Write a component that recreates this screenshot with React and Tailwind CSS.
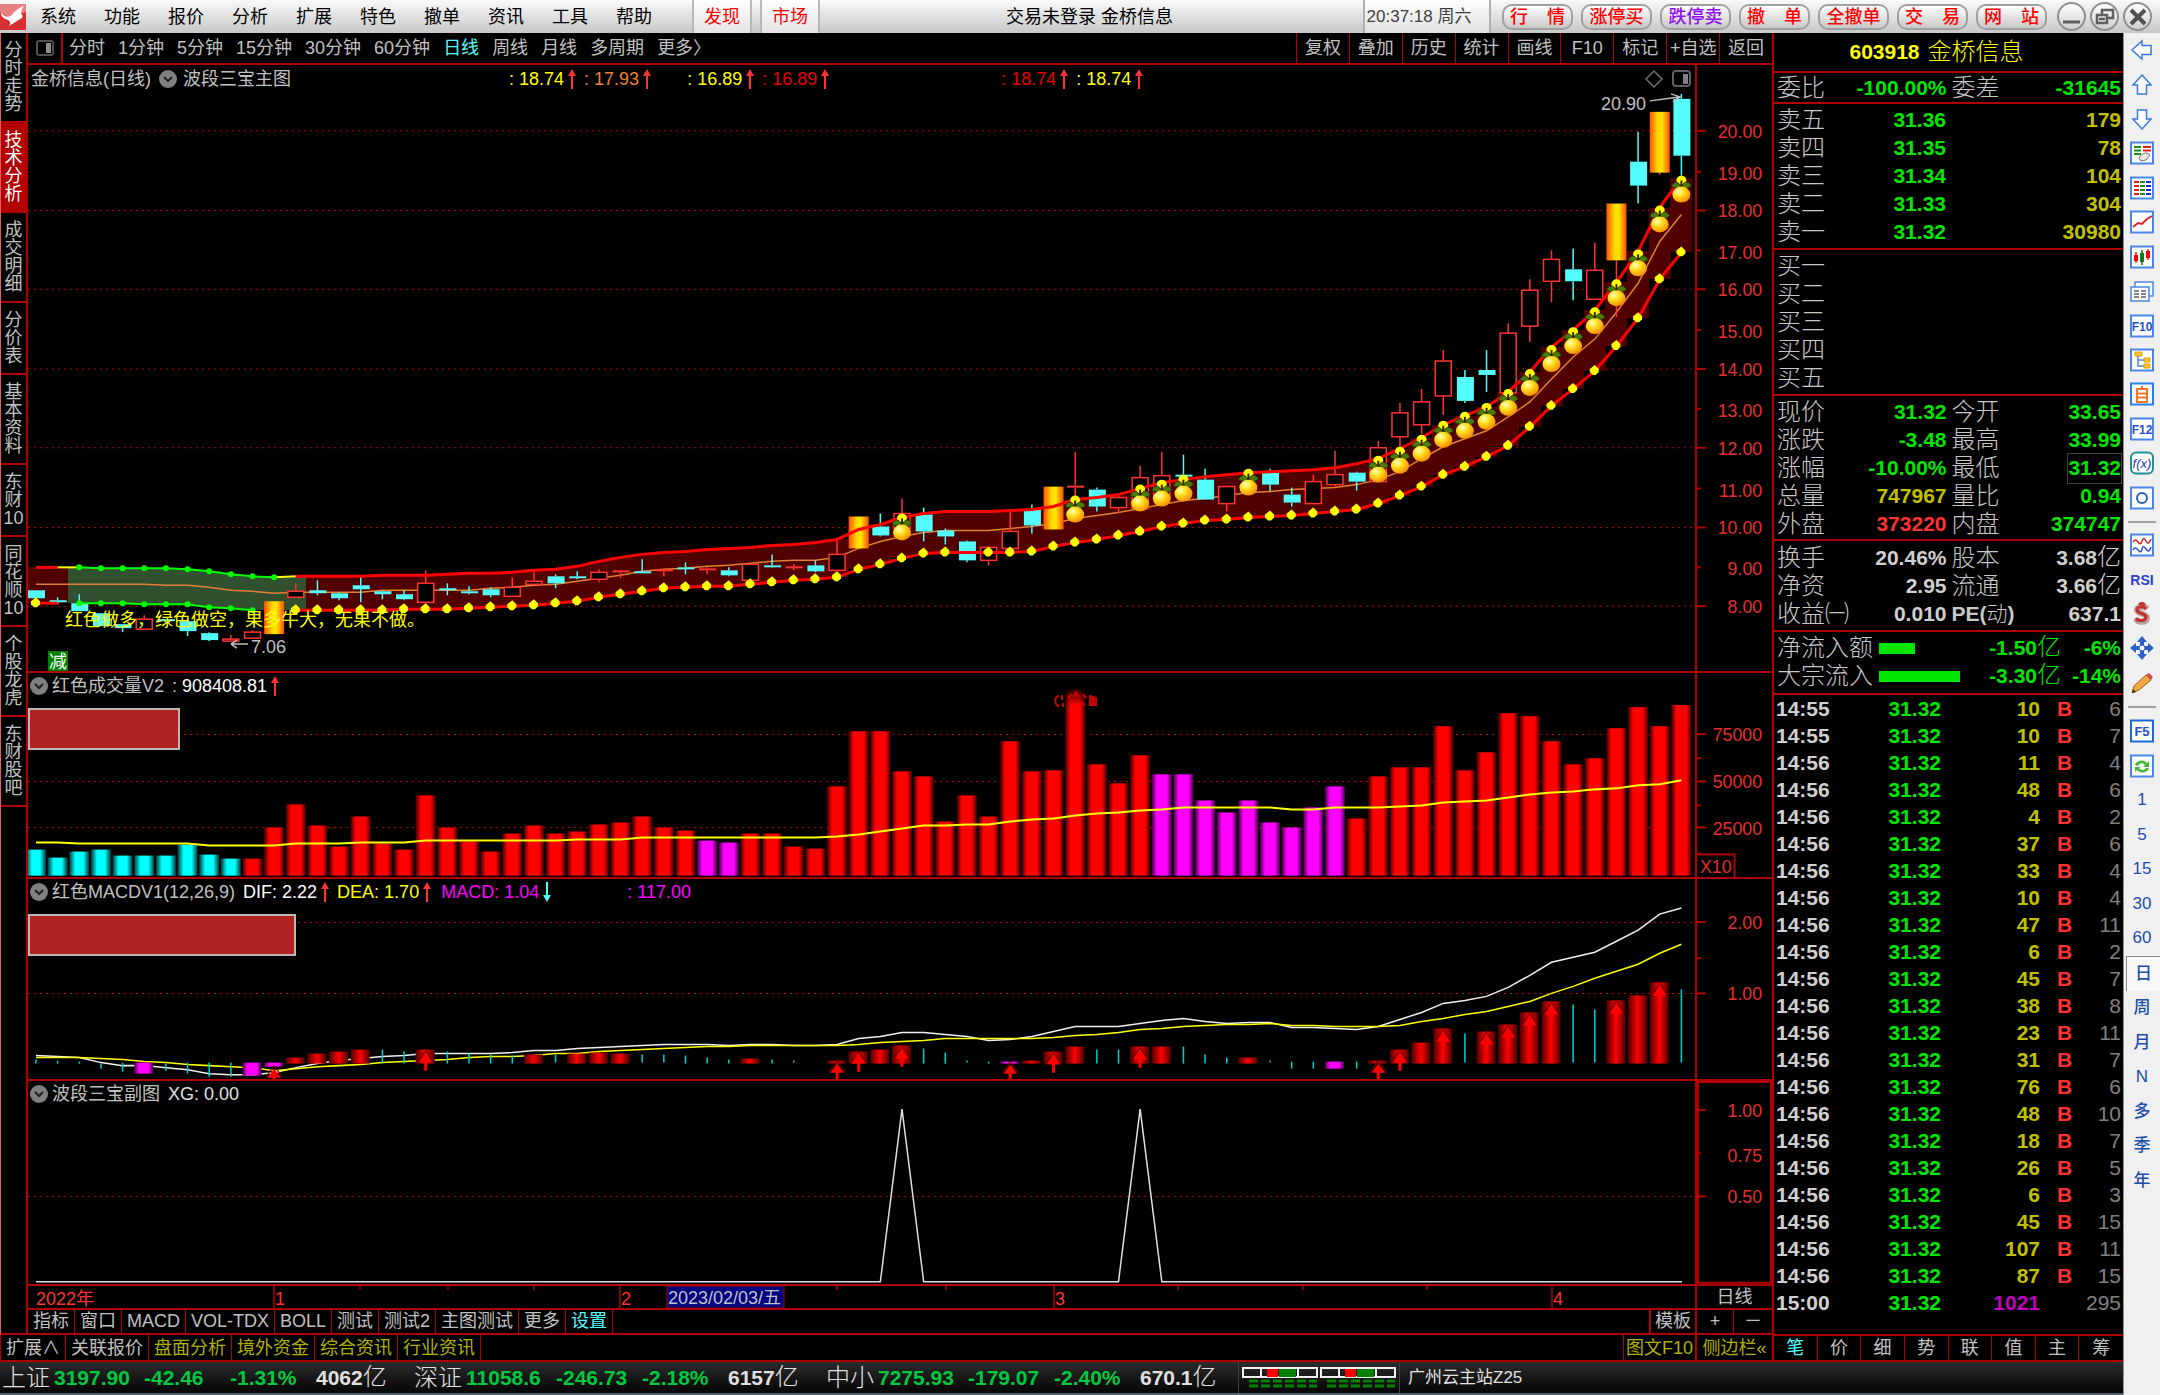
import React from "react";

const RED = "#b00000";
const X = (i) => 36 + 21.65 * i;

const menus = ["系统", "功能", "报价", "分析", "扩展", "特色", "撤单", "资讯", "工具", "帮助"];
const trades = ["行 情", "涨停买", "跌停卖", "撤 单", "全撤单", "交 易", "网 站"];
const periods = ["分时", "1分钟", "5分钟", "15分钟", "30分钟", "60分钟", "日线", "周线", "月线", "多周期", "更多〉"];
const tools = ["复权", "叠加", "历史", "统计", "画线", "F10", "标记", "+自选", "返回"];
const sideTabs = [
  ["分", "时", "走", "势"],
  ["技", "术", "分", "析"],
  ["成", "交", "明", "细"],
  ["分", "价", "表"],
  ["基", "本", "资", "料"],
  ["东", "财", "10"],
  ["同", "花", "顺", "10"],
  ["个", "股", "龙", "虎"],
  ["东", "财", "股", "吧"],
];
const indicatorTabs = ["指标", "窗口", "MACD", "VOL-TDX", "BOLL", "测试", "测试2", "主图测试", "更多", "设置"];
const infoTabs = ["扩展∧", "关联报价", "盘面分析", "境外资金", "综合资讯", "行业资讯"];

/* ---------- series ---------- */
const upper = [569, 569, 569, 570, 570, 570, 570, 571, 573, 576, 578, 579, 578, 578, 578, 578, 577, 577, 577, 576, 575, 575, 574, 572, 571, 568, 563, 559, 556, 554, 553, 551, 550, 549, 547, 546, 544, 541, 531, 526, 519, 515, 513, 513, 513, 512, 511, 508, 501, 499, 496, 490, 484, 481, 478, 476, 474, 473, 472, 471, 469, 465, 460, 450, 439, 426, 417, 408, 393, 373, 348, 331, 311, 283, 252, 208, 178];
const middle = [586, 586, 586, 586, 586, 586, 587, 587, 589, 592, 593, 595, 594, 594, 594, 594, 592, 592, 592, 592, 592, 590, 589, 587, 586, 583, 580, 577, 573, 571, 570, 568, 567, 565, 563, 562, 562, 559, 550, 543, 538, 534, 532, 532, 532, 530, 528, 525, 520, 517, 514, 510, 506, 502, 500, 497, 494, 493, 491, 490, 489, 486, 481, 473, 460, 448, 440, 432, 418, 403, 380, 358, 340, 313, 284, 242, 215];
const lower = [605, 605, 605, 605, 605, 606, 606, 606, 609, 610, 612, 612, 612, 612, 612, 612, 612, 611, 611, 611, 610, 609, 608, 607, 605, 603, 599, 596, 593, 590, 589, 588, 588, 586, 584, 582, 581, 579, 571, 566, 560, 555, 554, 554, 554, 554, 553, 548, 544, 541, 537, 533, 528, 525, 522, 521, 519, 518, 517, 515, 513, 511, 505, 497, 488, 476, 468, 458, 447, 428, 407, 390, 372, 347, 319, 280, 253];

/* kind: c = down, r = up (hollow), f = up (filled), g = gold; index, top, bottom, high, low */
const candles = [
  ["c", 0, 592, 600, 592, 600], ["c", 1, 602, 603, 599, 606], ["c", 2, 605, 613, 596, 613], ["c", 3, 615, 628, 615, 628],
  ["c", 4, 626, 630, 626, 634], ["r", 5, 621, 631, 617, 631], ["c", 6, 621, 623, 621, 624], ["c", 7, 623, 633, 621, 638],
  ["c", 8, 635, 642, 634, 643], ["r", 9, 641, 643, 637, 643], ["r", 10, 634, 640, 632, 640], ["g", 11, 603, 636, 603, 636],
  ["r", 12, 593, 599, 585, 599], ["c", 13, 592, 595, 582, 597], ["c", 14, 595, 600, 594, 602], ["c", 15, 587, 591, 579, 604],
  ["c", 16, 593, 596, 592, 601], ["c", 17, 596, 601, 592, 602], ["r", 18, 585, 604, 572, 604], ["c", 19, 590, 592, 585, 597],
  ["c", 20, 593, 594, 588, 596], ["c", 21, 591, 597, 589, 599], ["r", 22, 589, 598, 579, 598], ["r", 23, 583, 586, 574, 586],
  ["c", 24, 578, 585, 576, 590], ["c", 25, 578, 579, 573, 581], ["r", 26, 574, 581, 571, 584], ["f", 27, 572, 574, 572, 580],
  ["c", 28, 573, 574, 561, 574], ["f", 29, 571, 573, 571, 578], ["c", 30, 569, 570, 564, 576], ["f", 31, 570, 572, 569, 576],
  ["c", 32, 572, 577, 569, 578], ["r", 33, 566, 582, 566, 582], ["c", 34, 567, 568, 556, 569], ["f", 35, 568, 570, 566, 572],
  ["c", 36, 567, 573, 562, 574], ["r", 37, 556, 572, 539, 572], ["g", 38, 518, 550, 518, 550], ["c", 39, 528, 537, 515, 538],
  ["r", 40, 515, 530, 500, 530], ["c", 41, 516, 533, 509, 543], ["c", 42, 532, 538, 530, 546], ["c", 43, 543, 562, 542, 564],
  ["r", 44, 549, 562, 549, 567], ["r", 45, 533, 550, 513, 550], ["c", 46, 511, 527, 506, 535], ["g", 47, 488, 531, 488, 531],
  ["f", 48, 487, 489, 453, 510], ["c", 49, 491, 508, 489, 513], ["r", 50, 499, 509, 495, 515], ["r", 51, 479, 510, 467, 510],
  ["r", 52, 477, 500, 453, 500], ["c", 53, 476, 477, 456, 480], ["c", 54, 481, 501, 470, 501], ["r", 55, 488, 505, 487, 513],
  ["c", 57, 474, 486, 470, 493], ["c", 58, 496, 504, 489, 508], ["r", 59, 483, 505, 476, 505], ["r", 60, 476, 486, 452, 488],
  ["c", 61, 474, 483, 473, 492], ["r", 62, 449, 483, 442, 483], ["r", 63, 414, 438, 404, 448], ["r", 64, 403, 426, 390, 435],
  ["r", 65, 362, 397, 351, 416], ["c", 66, 378, 402, 371, 404], ["c", 67, 371, 376, 351, 393], ["r", 68, 334, 394, 324, 394],
  ["r", 69, 291, 327, 280, 343], ["r", 70, 260, 282, 251, 303], ["c", 71, 270, 282, 249, 301], ["r", 72, 271, 300, 243, 300],
  ["g", 73, 204, 261, 204, 318], ["c", 74, 162, 186, 132, 204], ["g", 75, 112, 173, 112, 175], ["c", 76, 99, 156, 94, 176],
];
const fruits = [
  [40, 534], [48, 516], [51, 505], [52, 500], [53, 495], [56, 489], [62, 476], [63, 467], [64, 455], [65, 441], [66, 432],
  [67, 423], [68, 409], [69, 389], [70, 365], [71, 347], [72, 327], [73, 299], [74, 269], [75, 225], [76, 195],
];

const volumes = [26, 18, 24, 26, 20, 20, 20, 31, 21, 17, 17, 48, 71, 50, 29, 59, 32, 26, 80, 48, 34, 24, 42, 50, 42, 44, 51, 53, 59, 48, 45, 35, 33, 42, 42, 29, 27, 89, 144, 144, 104, 99, 54, 80, 59, 134, 104, 105, 186, 111, 92, 120, 101, 101, 75, 63, 75, 53, 48, 68, 89, 57, 99, 108, 108, 149, 105, 123, 162, 159, 134, 111, 117, 147, 168, 149, 170];
const volumeMa = [844, 844, 845, 845, 845, 845, 845, 845, 847, 847, 847, 847, 845, 845, 845, 844, 844, 844, 842, 842, 842, 842, 842, 842, 842, 841, 841, 841, 839, 839, 839, 839, 839, 839, 839, 839, 839, 838, 836, 833, 830, 827, 827, 826, 826, 823, 821, 820, 817, 815, 814, 812, 811, 809, 809, 809, 809, 809, 811, 811, 809, 809, 809, 808, 807, 804, 803, 802, 799, 796, 794, 793, 791, 790, 787, 786, 782];
const volumeKind = (i) => (i < 10 ? "cy" : i === 31 || i === 32 || (i >= 52 && i <= 60) ? "mg" : "rd");

/* kind: r = red bar, m = magenta bar, c = cyan line; index, top, bottom */
const macdBars = [
  ["c", 0, 1060, 1064], ["c", 1, 1061, 1064], ["c", 2, 1062, 1064], ["c", 3, 1064, 1069], ["c", 4, 1063, 1072], ["m", 5, 1063, 1074],
  ["c", 6, 1064, 1071], ["c", 7, 1063, 1074], ["c", 8, 1063, 1077], ["c", 9, 1063, 1077], ["m", 10, 1063, 1076], ["m", 11, 1063, 1067],
  ["r", 12, 1058, 1064], ["r", 13, 1054, 1064], ["r", 14, 1052, 1064], ["r", 15, 1050, 1064], ["c", 16, 1050, 1064], ["c", 17, 1052, 1064],
  ["r", 18, 1050, 1064], ["c", 19, 1052, 1064], ["c", 20, 1054, 1064], ["c", 21, 1055, 1064], ["c", 22, 1056, 1064], ["r", 23, 1055, 1064],
  ["c", 24, 1055, 1063], ["r", 25, 1054, 1064], ["r", 26, 1053, 1064], ["r", 27, 1054, 1064], ["c", 28, 1055, 1063], ["c", 29, 1055, 1063],
  ["c", 30, 1056, 1064], ["c", 31, 1058, 1064], ["c", 32, 1060, 1064], ["r", 33, 1059, 1064], ["c", 34, 1060, 1064], ["c", 35, 1061, 1063],
  ["r", 37, 1061, 1064], ["r", 38, 1052, 1064], ["r", 39, 1050, 1064], ["r", 40, 1046, 1064], ["c", 41, 1049, 1064], ["c", 42, 1053, 1064],
  ["c", 43, 1061, 1063], ["c", 44, 1062, 1064], ["m", 45, 1062, 1064], ["r", 46, 1061, 1064], ["r", 47, 1052, 1064], ["r", 48, 1047, 1064],
  ["c", 49, 1050, 1064], ["c", 50, 1050, 1064], ["r", 51, 1047, 1064], ["r", 52, 1047, 1064], ["c", 53, 1047, 1064], ["c", 54, 1055, 1064],
  ["c", 55, 1058, 1064], ["r", 56, 1058, 1064], ["c", 57, 1061, 1063], ["c", 58, 1062, 1069], ["c", 59, 1062, 1069], ["m", 60, 1062, 1069],
  ["c", 61, 1062, 1069], ["r", 62, 1061, 1064], ["r", 63, 1050, 1064], ["r", 64, 1043, 1064], ["r", 65, 1029, 1064], ["c", 66, 1034, 1063],
  ["r", 67, 1032, 1064], ["r", 68, 1025, 1064], ["r", 69, 1013, 1064], ["r", 70, 1002, 1064], ["c", 71, 1005, 1063], ["c", 72, 1010, 1063],
  ["r", 73, 1001, 1064], ["r", 74, 996, 1064], ["r", 75, 983, 1064], ["c", 76, 990, 1063],
];
const macdArrows = [
  [11, 1069], [18, 1054], [37, 1064], [38, 1055], [40, 1050], [45, 1065], [47, 1056], [51, 1051], [62, 1064], [63, 1054],
  [65, 1033], [67, 1036], [68, 1029], [69, 1017], [70, 1006], [73, 1005], [75, 987],
];
const dif = [1056, 1057, 1058, 1063, 1066, 1066, 1068, 1070, 1074, 1075, 1075, 1073, 1068, 1064, 1061, 1059, 1057, 1056, 1054, 1054, 1054, 1054, 1053, 1051, 1051, 1049, 1048, 1047, 1046, 1045, 1045, 1045, 1046, 1045, 1045, 1046, 1046, 1045, 1039, 1037, 1033, 1033, 1035, 1037, 1041, 1040, 1037, 1032, 1027, 1027, 1027, 1024, 1021, 1019, 1022, 1024, 1023, 1023, 1028, 1028, 1029, 1030, 1027, 1020, 1013, 1004, 1001, 997, 988, 976, 963, 958, 953, 942, 931, 915, 909];
const dea = [1058, 1058, 1058, 1059, 1060, 1062, 1063, 1065, 1066, 1067, 1068, 1071, 1069, 1067, 1066, 1065, 1063, 1062, 1061, 1060, 1058, 1057, 1057, 1056, 1054, 1054, 1052, 1051, 1050, 1049, 1048, 1047, 1047, 1046, 1046, 1046, 1046, 1046, 1045, 1043, 1042, 1041, 1039, 1039, 1039, 1039, 1039, 1038, 1036, 1035, 1033, 1030, 1029, 1027, 1026, 1025, 1025, 1024, 1026, 1026, 1027, 1027, 1027, 1026, 1022, 1019, 1015, 1012, 1007, 1002, 994, 987, 979, 972, 965, 954, 945];

const pts = (arr, a = 0, b = arr.length - 1) =>
  arr.slice(a, b + 1).map((y, k) => `${X(a + k)},${y}`).join(" ");

/* ---------- chart pieces ---------- */
function Plot({ top, height, children }) {
  return (
    <svg className="absolute inset-0 h-full w-full" viewBox={`28 ${top} 1667 ${height}`} preserveAspectRatio="none" aria-hidden="true">
      {children}
    </svg>
  );
}

function Grid({ ys }) {
  return ys.map((y) => (
    <line key={y} x1="28" x2="1695" y1={y} y2={y} stroke="#b00000" strokeWidth="1" strokeDasharray="2 4" shapeRendering="crispEdges" />
  ));
}

function Axis({ top, height, long, short, labels, children }) {
  return (
    <div className="relative w-[77px] shrink-0 border-l-2 border-[#b00000]">
      <svg className="absolute inset-0 h-full w-full" viewBox={`1696 ${top} 76 ${height}`} preserveAspectRatio="none">
        {long.map((y) => <path key={y} d={`M1696 ${y}h9`} stroke={RED} strokeWidth="2" />)}
        {short.map((y) => <path key={y} d={`M1696 ${y}h4`} stroke={RED} strokeWidth="2" />)}
        {labels.map(([y, t]) => (
          <text key={t} x="1762" y={y + 7} textAnchor="end" fontSize="18" fill="#e62e2e">{t}</text>
        ))}
        {children}
      </svg>
    </div>
  );
}

function Panel({ grow, children, axis }) {
  return (
    <section className={`flex min-h-0 border-b-2 border-[#b00000] ${grow}`}>
      <div className="relative min-w-0 flex-1">{children}</div>
      {axis}
    </section>
  );
}

function Up({ down }) {
  return (
    <svg className={`ml-1 h-5 w-2 shrink-0 ${down ? "rotate-180 text-[#54fcfc]" : "text-[#ff3232]"}`} viewBox="0 0 8 20" fill="currentColor">
      <path d="M4 0 8 7H5v13H3V7H0z" />
    </svg>
  );
}

function Toggle() {
  return (
    <button className="h-[18px] w-[18px] shrink-0" aria-label="展开">
      <svg viewBox="0 0 18 18" className="h-full w-full">
        <circle cx="9" cy="9" r="9" fill="#808080" />
        <path d="M5 7l4 4 4-4" fill="none" stroke="#202020" strokeWidth="2" />
      </svg>
    </button>
  );
}

function Fruit({ i, y }) {
  const x = X(i);
  return (
    <g>
      <circle cx={x} cy={y - 14} r="5" fill="#ffff00" />
      <path d={`M${x} ${y - 7}C${x - 3} ${y - 15} ${x - 8} ${y - 13} ${x - 10} ${y - 8}C${x - 5} ${y - 6} ${x - 3} ${y - 6} ${x} ${y - 7}C${x + 4} ${y - 5} ${x + 7} ${y - 6} ${x + 10} ${y - 9}C${x + 6} ${y - 15} ${x + 2} ${y - 13} ${x} ${y - 7}`} fill="#4c7a08" stroke="#203800" />
      <path d={`M${x} ${y - 14}v7`} stroke="#3a1a00" strokeWidth="2" />
      <ellipse cx={x} cy={y} rx="9" ry="8" fill="url(#fruit)" />
    </g>
  );
}

function MainPlot() {
  return (
    <Plot top={65} height={608}>
      <defs>
        <radialGradient id="fruit" cx="0.35" cy="0.3" r="0.75">
          <stop offset="0" stopColor="#ffffc0" />
          <stop offset="0.4" stopColor="#ffe020" />
          <stop offset="1" stopColor="#f88800" />
        </radialGradient>
        <linearGradient id="gold">
          <stop offset="0" stopColor="#ff5000" />
          <stop offset="0.4" stopColor="#ffd800" />
          <stop offset="0.6" stopColor="#ffe800" />
          <stop offset="1" stopColor="#ff5000" />
        </linearGradient>
      </defs>
      <Grid ys={[131, 211, 290, 370, 449, 529, 608]} />
      {upper.map((u, i) => (
        <rect key={i} x={i ? X(i) - 11 : 28} y={u} width={i ? 22 : 19} height={lower[i] - u} fill={i > 1 && i < 13 ? "#305030" : "#500000"} shapeRendering="crispEdges" />
      ))}
      <polyline points={pts(middle)} fill="none" stroke="#e08030" strokeWidth="1.5" />
      {candles.map(([k, i, t, b, h, l]) => {
        const x = X(i);
        const c = k === "c" ? "#54fcfc" : "#ff3232";
        return (
          <g key={i}>
            {h < t && <path d={`M${x} ${h}V${t}`} stroke={c} strokeWidth="1.5" />}
            {l > b && <path d={`M${x} ${b}V${l}`} stroke={c} strokeWidth="1.5" />}
            {k === "g" ? (
              <rect x={x - 10} y={t} width="20" height={b - t} fill="url(#gold)" />
            ) : k === "r" ? (
              <rect x={x - 8} y={t} width="16" height={b - t} fill="#000" stroke={c} strokeWidth="1.5" />
            ) : (
              <rect x={x - 8} y={t} width="17" height={Math.max(b - t, 2)} fill={c} />
            )}
          </g>
        );
      })}
      <polyline points={pts(upper, 0, 1)} fill="none" stroke="#ff0000" strokeWidth="3" />
      <polyline points={pts(upper, 1, 2)} fill="none" stroke="#ffff00" strokeWidth="2" />
      <polyline points={pts(upper, 2, 11)} fill="none" stroke="#00ff00" strokeWidth="2" />
      <polyline points={pts(upper, 11, 12)} fill="none" stroke="#ffff00" strokeWidth="2" />
      <polyline points={pts(upper, 12)} fill="none" stroke="#ff0000" strokeWidth="3" />
      <polyline points={pts(lower, 0, 1)} fill="none" stroke="#ff0000" strokeWidth="3" />
      <polyline points={pts(lower, 2, 10)} fill="none" stroke="#00ff00" strokeWidth="2" />
      <polyline points={pts(lower, 12)} fill="none" stroke="#ff0000" strokeWidth="3" />
      {upper.slice(2, 12).map((y, k) => <circle key={k} cx={X(k + 2)} cy={y} r="3" fill="#00ff00" />)}
      {lower.slice(2, 11).map((y, k) => <circle key={k} cx={X(k + 2)} cy={y} r="3" fill="#00ff00" />)}
      {lower.map((y, i) =>
        i === 0 || (i > 11 && i !== 43) ? (
          <path key={i} d={`M${X(i)} ${y - 6}l4 4v3l-3 3h-3l-3-3v-3z`} fill="#ffff00" />
        ) : null
      )}
      {fruits.map(([i, y]) => <Fruit key={i} i={i} y={y} />)}
      <text x="65" y="628" fontSize="18" fill="#ffff00">红色做多，绿色做空，果多牛大，无果不做。</text>
      <path d="M231 646h17M231 646l6-4M231 646l6 4" stroke="#c0c0c0" fill="none" strokeWidth="1.5" />
      <text x="251" y="655" fontSize="18" fill="#c0c0c0">7.06</text>
      <rect x="48" y="653" width="20" height="20" fill="#008000" />
      <text x="49" y="670" fontSize="18" fill="#fff">减</text>
      <text x="1601" y="110" fontSize="18" fill="#c0c0c0">20.90</text>
      <path d="M1650 101l29-4M1671 94l9 3-7 5" stroke="#c0c0c0" fill="none" strokeWidth="1.5" />
      <path d="M1654 71l8 8-8 8-8-8z" fill="none" stroke="#707070" strokeWidth="1.5" />
      <rect x="1673" y="71" width="17" height="15" rx="3" fill="none" stroke="#606060" strokeWidth="2" />
      <rect x="1683" y="74" width="5" height="10" fill="#808080" />
    </Plot>
  );
}

function VolumePlot() {
  return (
    <Plot top={675} height={203}>
      <defs>
        <linearGradient id="rd"><stop offset="0" stopColor="#400000" /><stop offset="0.25" stopColor="#ff0000" /><stop offset="0.75" stopColor="#ff0000" /><stop offset="1" stopColor="#400000" /></linearGradient>
        <linearGradient id="cy"><stop offset="0" stopColor="#003838" /><stop offset="0.3" stopColor="#00ffff" /><stop offset="0.7" stopColor="#00ffff" /><stop offset="1" stopColor="#003838" /></linearGradient>
        <linearGradient id="mg"><stop offset="0" stopColor="#400040" /><stop offset="0.25" stopColor="#ff00ff" /><stop offset="0.75" stopColor="#ff00ff" /><stop offset="1" stopColor="#400040" /></linearGradient>
        <linearGradient id="fade" x1="0" x2="0" y1="0" y2="1"><stop offset="0" stopColor="#000" /><stop offset="1" stopColor="#000" stopOpacity="0" /></linearGradient>
      </defs>
      <Grid ys={[736, 783, 829]} />
      {volumes.map((h, i) => (
        <rect key={i} x={X(i) - 10} y={877 - h} width="20" height={h} fill={`url(#${volumeKind(i)})`} />
      ))}
      <rect x="1064" y="689" width="24" height="18" fill="url(#fade)" />
      <g fill="none" stroke="#d00000" strokeWidth="2">
        <path d="M1059 698c-5 1-5 9 0 10M1062 697v5M1063 705v4M1068 700l3-4M1074 699l2-5 3 5M1083 696l3 4M1068 706l4-3M1081 704l4 3" />
        <path d="M1090 698l6 2v7h-6zM1093 699v8" fill="#a00000" />
      </g>
      <polyline points={pts(volumeMa)} fill="none" stroke="#ffff00" strokeWidth="2" />
    </Plot>
  );
}

function MacdPlot() {
  return (
    <Plot top={880} height={200}>
      <defs>
        <linearGradient id="mr"><stop offset="0" stopColor="#500000" /><stop offset="0.5" stopColor="#ff0000" /><stop offset="1" stopColor="#500000" /></linearGradient>
      </defs>
      <Grid ys={[923, 994]} />
      <polyline points={pts(dif)} fill="none" stroke="#f0f0f0" strokeWidth="1.5" />
      <polyline points={pts(dea)} fill="none" stroke="#ffff00" strokeWidth="1.5" />
      {macdBars.map(([k, i, t, b]) =>
        k === "c" ? (
          <path key={i} d={`M${X(i)} ${t}V${b}`} stroke="#00d0d0" strokeWidth="1.5" />
        ) : (
          <rect key={i} x={X(i) - 10} y={t} width="19" height={b - t} fill={k === "r" ? "url(#mr)" : "url(#mg)"} />
        )
      )}
      {macdArrows.map(([i, y]) => (
        <g key={i}>
          <path d={`M${X(i)} ${y - 3}l8 11`} stroke="#600000" />
          <path d={`M${X(i)} ${y - 3}l-8 11`} stroke="#600000" />
          <path d={`M${X(i)} ${y}l7 9h-5.5v8h-3v-8h-5.5z`} fill="#ff0000" />
        </g>
      ))}
    </Plot>
  );
}

function SubPlot() {
  return (
    <Plot top={1082} height={202}>
      <Grid ys={[1197]} />
      <path d={`M36 1282H${X(39)}L${X(40)} 1110L${X(41)} 1282H${X(50)}L${X(51)} 1110L${X(52)} 1282H1682`} fill="none" stroke="#e0e0e0" strokeWidth="1.5" />
    </Plot>
  );
}

/* ---------- chart column ---------- */
function Value({ c, children }) {
  return <span className={`flex items-center ${c}`}><span className="mr-[5px]">:</span>{children}<Up /></span>;
}

function Charts() {
  return (
    <div className="flex min-h-0 min-w-0 flex-1 flex-col">
      <nav className="flex h-8 shrink-0 items-stretch border-b-2 border-[#b00000] text-[#c0c0c0]">
        <button className="flex w-[35px] items-center justify-center border-r-2 border-[#b00000]" aria-label="分栏">
          <span className="flex h-4 w-[18px] justify-end rounded-[3px] border-2 border-[#505050] p-px"><span className="w-[5px] bg-[#909090]" /></span>
        </button>
        <div className="flex flex-1 items-center gap-[13px] pl-[6px]">
          {periods.map((p) => <button key={p} className={p === "日线" ? "text-[#54fcfc]" : ""}>{p}</button>)}
        </div>
        <div className="grid w-[476px] grid-cols-9">
          {tools.map((t) => <button key={t} className="whitespace-nowrap border-l border-[#b00000] text-center">{t}</button>)}
        </div>
      </nav>

      <Panel
        grow="flex-[610_1_0%]"
        axis={<Axis top={65} height={608} long={[131, 211, 290, 370, 449, 529, 608]} short={[172, 251, 331, 410, 490, 569]}
          labels={[[131, "20.00"], [173, "19.00"], [211, "18.00"], [253, "17.00"], [290, "16.00"], [332, "15.00"], [370, "14.00"], [411, "13.00"], [449, "12.00"], [491, "11.00"], [529, "10.00"], [570, "9.00"], [608, "8.00"]]} />}
      >
        <MainPlot />
        <div className="relative flex h-7 items-center pl-[3px] text-[#c0c0c0]">
          金桥信息(日线)
          <span className="ml-2 flex items-center gap-[6px]"><Toggle />波段三宝主图</span>
          <span className="ml-[218px] flex items-center gap-2">
            <Value c="text-[#ffff00]">18.74</Value>
            <Value c="text-[#f08030]">17.93</Value>
          </span>
          <span className="ml-9 flex items-center gap-2">
            <Value c="text-[#ffff00]">16.89</Value>
            <Value c="text-[#e60000]">16.89</Value>
          </span>
          <span className="ml-[172px] flex items-center gap-2">
            <Value c="text-[#e60000]">18.74</Value>
            <Value c="text-[#ffff00]">18.74</Value>
          </span>
        </div>
      </Panel>

      <Panel
        grow="flex-[205_1_0%]"
        axis={<Axis top={675} height={203} long={[736, 783, 829]} short={[760, 807, 855]} labels={[[736, "75000"], [783, "50000"], [829, "25000"]]}>
          <path d="M1696 856h38v22" fill="none" stroke={RED} strokeWidth="2" />
          <text x="1699" y="874" fontSize="18" fill="#e62e2e">X10</text>
        </Axis>}
      >
        <VolumePlot />
        <div className="relative flex h-[26px] items-center pl-[2px] text-[#c0c0c0]">
          <Toggle /><span className="ml-1">红色成交量V2</span>
          <span className="ml-2 flex items-center">:<span className="ml-[5px] text-white">908408.81</span><Up /></span>
        </div>
        <div className="relative mt-[9px] h-[42px] w-[152px] border-2 border-[#b8b8b8] bg-[#b22222]" />
      </Panel>

      <Panel
        grow="flex-[202_1_0%]"
        axis={<Axis top={880} height={200} long={[923, 994]} short={[959]} labels={[[923, "2.00"], [994, "1.00"]]} />}
      >
        <MacdPlot />
        <div className="relative flex h-[26px] items-center pl-[2px] text-[#c0c0c0]">
          <Toggle /><span className="ml-1">红色MACDV1(12,26,9)</span>
          <span className="ml-2 flex items-center text-white">DIF: 2.22<Up /></span>
          <span className="ml-2 flex items-center text-[#ffff00]">DEA: 1.70<Up /></span>
          <span className="ml-[10px] flex items-center text-[#ff00ff]">MACD: 1.04<Up down /></span>
          <span className="ml-[76px] text-[#ff00ff]"><span className="mr-[5px]">:</span>117.00</span>
        </div>
        <div className="relative mt-[9px] h-[42px] w-[268px] border-2 border-[#b8b8b8] bg-[#b22222]" />
      </Panel>

      <Panel
        grow="flex-[204_1_0%]"
        axis={<Axis top={1082} height={202} long={[1111, 1197]} short={[1154]} labels={[[1111, "1.00"], [1156, "0.75"], [1197, "0.50"]]}>
          <path d="M1697 1083h74v200h-74z" fill="none" stroke={RED} strokeWidth="2" />
        </Axis>}
      >
        <SubPlot />
        <div className="relative flex h-[26px] items-center pl-[2px] text-[#c0c0c0]">
          <Toggle /><span className="ml-1">波段三宝副图</span>
          <span className="ml-2 text-[#e0e0e0]">XG: 0.00</span>
        </div>
      </Panel>

      <div className="flex h-6 shrink-0 border-b-2 border-[#b00000]">
        <div className="relative min-w-0 flex-1">
          <svg className="absolute inset-0 h-full w-full" viewBox="28 1285 1667 22" preserveAspectRatio="none" fontSize="18">
            {[274, 620, 1054, 1552].map((x) => <path key={x} d={`M${x} 1285v22`} stroke={RED} strokeWidth="1.5" />)}
            {[360, 448, 534, 837, 946, 1178, 1303, 1427].map((x) => <path key={x} d={`M${x} 1285v4`} stroke={RED} strokeWidth="1.5" />)}
            <rect x="667" y="1285" width="117" height="22" fill="#000080" stroke={RED} />
            <text x="668" y="1303" fill="#c0c0c0">2023/02/03/五</text>
            <g fill="#ff3232">
              <text x="36" y="1304">2022年</text>
              <text x="275" y="1304">1</text>
              <text x="621" y="1304">2</text>
              <text x="1055" y="1304">3</text>
              <text x="1553" y="1304">4</text>
            </g>
          </svg>
        </div>
        <button className="flex w-[77px] items-center justify-center border-l-2 border-[#b00000] text-[#c0c0c0]">日线</button>
      </div>

      <nav className="flex h-[25px] shrink-0 border-b-2 border-[#b00000] text-[#c0c0c0]">
        {indicatorTabs.map((t) => (
          <button key={t} className={`border-r border-[#b00000] px-[5px] ${t === "设置" ? "text-[#54fcfc]" : ""}`}>{t}</button>
        ))}
        <button className="ml-auto w-[46px] border-l-2 border-[#b00000] text-center">模板</button>
        <button className="w-[38px] border-l-2 border-[#b00000] text-center">+</button>
        <button className="w-[39px] border-l border-[#b00000] text-center">－</button>
      </nav>
    </div>
  );
}

/* ---------- quote panel ---------- */
const G = "text-[#00e600]";
const Y = "text-[#c0c000]";
const R = "text-[#ff3232]";
const W = "text-[#d0d0d0]";
const asks = [["卖五", "31.36", "179"], ["卖四", "31.35", "78"], ["卖三", "31.34", "104"], ["卖二", "31.33", "304"], ["卖一", "31.32", "30980"]];
const bids = ["买一", "买二", "买三", "买四", "买五"];
const stats = [
  ["现价", "31.32", G, "今开", "33.65", G],
  ["涨跌", "-3.48", G, "最高", "33.99", G],
  ["涨幅", "-10.00%", G, "最低", "31.32", G],
  ["总量", "747967", Y, "量比", "0.94", G],
  ["外盘", "373220", R, "内盘", "374747", G],
];
const basics = [
  ["换手", "20.46%", W, "股本", "3.68亿", W],
  ["净资", "2.95", W, "流通", "3.66亿", W],
  ["收益㈠", "0.010", W, "PE(动)", "637.1", W],
];
const ticks = [
  ["14:55", "10", "6"], ["14:55", "10", "7"], ["14:56", "11", "4"], ["14:56", "48", "6"], ["14:56", "4", "2"], ["14:56", "37", "6"],
  ["14:56", "33", "4"], ["14:56", "10", "4"], ["14:56", "47", "11"], ["14:56", "6", "2"], ["14:56", "45", "7"], ["14:56", "38", "8"],
  ["14:56", "23", "11"], ["14:56", "31", "7"], ["14:56", "76", "6"], ["14:56", "48", "10"], ["14:56", "18", "7"], ["14:56", "26", "5"],
  ["14:56", "6", "3"], ["14:56", "45", "15"], ["14:56", "107", "11"], ["14:56", "87", "15"], ["15:00", "1021", "295"],
];

function Num({ v, c }) {
  const hasUnit = v.endsWith("亿");
  return (
    <span className={`text-[21px] font-bold ${c}`}>
      {hasUnit ? v.slice(0, -1) : v}
      {hasUnit && <span className="text-[24px] font-light">亿</span>}
    </span>
  );
}

function Pairs({ rows, className }) {
  return (
    <div className={`shrink-0 border-b-2 border-[#b00000] ${className}`}>
      {rows.map(([a, av, ac, b, bv, bc]) => (
        <dl key={a} className="flex h-7 items-center leading-7">
          <div className="flex flex-1 items-center justify-between pl-[3px]">
            <dt className="text-[24px]">{a}</dt>
            <dd><Num v={av} c={ac} /></dd>
          </div>
          <div className="flex flex-1 items-center justify-between pr-[2px] pl-[5px]">
            <dt className={b === "PE(动)" ? "text-[21px] font-bold" : "text-[24px]"}>
              {b === "PE(动)" ? <>PE(<span className="font-light">动</span>)</> : b}
            </dt>
            <dd className={b === "最低" ? "outline outline-1 outline-[#404040]" : ""}><Num v={bv} c={bc} /></dd>
          </div>
        </dl>
      ))}
    </div>
  );
}

function Quote() {
  return (
    <aside className="flex w-[351px] shrink-0 flex-col border-l-2 border-[#b00000] font-light text-[#c8c8c8]">
      <h1 className="flex h-10 shrink-0 items-center justify-center border-b-2 border-[#b00000] pr-6 text-[24px] font-light text-[#ffff00]">
        <span className="mr-2 text-[21px] font-bold">603918</span>金桥信息
      </h1>
      <Pairs className="h-[31px] pt-px" rows={[["委比", "-100.00%", G, "委差", "-31645", G]]} />
      <div className="h-[146px] shrink-0 border-b-2 border-[#b00000] pt-[2px]">
        <table className="w-full leading-7">
          <tbody>
            {asks.map(([n, p, v]) => (
              <tr key={n} className="h-7">
                <th className="w-[80px] pl-[3px] text-left text-[24px] font-light">{n}</th>
                <td className={`w-[92px] text-right text-[21px] font-bold ${G}`}>{p}</td>
                <td className={`pr-[2px] text-right text-[21px] font-bold ${Y}`}>{v}</td>
              </tr>
            ))}
          </tbody>
        </table>
      </div>
      <div className="h-[146px] shrink-0 border-b-2 border-[#b00000] pt-[2px]">
        <table className="w-full leading-7">
          <tbody>
            {bids.map((n) => (
              <tr key={n} className="h-7">
                <th className="w-[80px] pl-[3px] text-left text-[24px] font-light">{n}</th>
                <td /><td />
              </tr>
            ))}
          </tbody>
        </table>
      </div>
      <Pairs className="h-[145px] pt-[2px]" rows={stats} />
      <Pairs className="h-[91px] pt-[3px]" rows={basics} />
      <div className="h-[63px] shrink-0 border-b-2 border-[#b00000] pt-[2px] leading-7">
        {[["净流入额", "w-9", "-1.50亿", "-6%"], ["大宗流入", "w-[81px]", "-3.30亿", "-14%"]].map(([n, w, v, p]) => (
          <div key={n} className="flex h-7 items-center pr-[2px] pl-[3px]">
            <span className="w-[102px] text-[24px]">{n}</span>
            <span className={`h-[11px] bg-[#00e600] ${w}`} />
            <span className="ml-auto text-right"><Num v={v} c={G} /></span>
            <span className="w-[60px] text-right"><Num v={p} c={G} /></span>
          </div>
        ))}
      </div>
      <div className="min-h-0 flex-1">
        <table className="w-full table-fixed text-[21px] font-bold leading-[27px]">
          <tbody>
            {ticks.map(([t, v, n], k) => (
              <tr key={k} className="h-[27px]">
                <td className="w-[80px] pl-[2px] text-[#d0d0d0]">{t}</td>
                <td className={`w-[87px] text-right ${G}`}>31.32</td>
                <td className={`w-[99px] text-right ${v === "1021" ? "text-[#c000c0]" : "text-[#c0c000]"}`}>{v}</td>
                <td className={`w-[49px] text-center ${R}`}>{v === "1021" ? "" : "B"}</td>
                <td className="pr-[2px] text-right font-normal text-[#808080]"><span className="float-right whitespace-nowrap">{n}</span></td>
              </tr>
            ))}
          </tbody>
        </table>
      </div>
      <nav className="grid h-7 shrink-0 grid-cols-8 border-y-2 border-[#b00000] font-normal text-[#c0c0c0]">
        {["笔", "价", "细", "势", "联", "值", "主", "筹"].map((t) => (
          <button key={t} className={`border-r border-[#b00000] last:border-r-0 ${t === "笔" ? "text-[#54fcfc]" : ""}`}>{t}</button>
        ))}
      </nav>
    </aside>
  );
}

/* ---------- right toolbar ---------- */
const Box = ({ children, c = "#4a86e8", rx = 0 }) => (
  <svg viewBox="0 0 24 24" className="h-6 w-6" fill="none">
    <rect x="1" y="1.5" width="22" height="21" rx={rx} fill="#fff" stroke={c} strokeWidth="2" />
    {children}
  </svg>
);
const Txt = ({ children, c = "#2a4fc8", s = 13 }) => (
  <text x="12" y="17" fontSize={s} fontWeight="bold" textAnchor="middle" fill={c}>{children}</text>
);
const Arrow = ({ r }) => (
  <svg viewBox="0 0 24 24" className={`h-6 w-6 ${r}`}>
    <path d="M12 2 21 12h-4.5v9h-9v-9H3z" fill="#fff" stroke="#3a78e0" strokeWidth="1.5" />
  </svg>
);

const iconsA = [
  ["后退", <Arrow r="-rotate-90" />],
  ["向上", <Arrow r="" />],
  ["向下", <Arrow r="rotate-180" />],
  ["自选", <Box><path d="M4 6h7M4 9.5h7M4 13h7" stroke="#1a8a1a" strokeWidth="2" /><path d="M13 6h8M13 9.5h8" stroke="#e02020" strokeWidth="2" /><path d="M9 17c2-4 5-5 8-5l3 2-4 5-5 1z" fill="#e8e8e8" stroke="#707070" /></Box>],
  ["行情", <Box><path d="M4 6h5M4 10h5M4 14h5M4 18h5" stroke="#e02020" strokeWidth="2" /><path d="M10 6h5M10 10h5M10 14h5M10 18h5" stroke="#1a8a1a" strokeWidth="2" /><path d="M16 6h5M16 10h5M16 14h5M16 18h5" stroke="#2020e0" strokeWidth="2" /></Box>],
  ["走势", <Box><path d="M3 17l5-4 4 1 5-5 5-3" stroke="#e02020" strokeWidth="2" /></Box>],
  ["K线", <Box><path d="M6 7v11M18 4v11" stroke="#e02020" strokeWidth="1.5" /><path d="M12 5v15" stroke="#107010" strokeWidth="1.5" /><path d="M4 10h4v6H4zM16 6h4v7h-4z" fill="#ff0000" /><path d="M10 8h4v9h-4z" fill="#108010" /></Box>],
  ["资讯", <svg viewBox="0 0 24 24" className="h-6 w-6"><path d="M5 3h18v14H5z" fill="#fff" stroke="#4a86e8" strokeWidth="1.5" /><path d="M1 8h18v14H1z" fill="#fff" stroke="#4a86e8" strokeWidth="1.5" /><path d="M4 12h5M11 12h5M4 15h5M11 15h5M4 18h5M11 18h5" stroke="#606060" strokeWidth="1.5" /></svg>],
  ["F10", <Box><Txt s={12}>F10</Txt></Box>],
  ["板块", <Box><path d="M8 8v10h6M8 12h6" stroke="#4a86e8" strokeWidth="1.5" /><path d="M5 4h7v4H5zM14 10h6v4h-6zM14 16h6v4h-6z" fill="#ffc830" stroke="#e09a10" /></Box>],
  ["自选股", <Box c="#2a80e8"><path d="M12 4v3M7 7h10v13H7zM7 11.5h10M7 15.5h10" stroke="#f07828" strokeWidth="2" /></Box>],
  ["F12", <Box><Txt s={12}>F12</Txt></Box>],
  ["公式", <Box c="#209090" rx={5}><text x="12" y="17" fontSize="13" fontStyle="italic" textAnchor="middle" fill="#2040c0">f(x)</text></Box>],
  ["圆", <Box><circle cx="12" cy="12" r="5" stroke="#2a60c0" strokeWidth="2" /></Box>],
];
const iconsB = [
  ["波动", <Box><path d="M3 9q2.500-4 5 0t4-1 4 0 5-2" stroke="#e02020" strokeWidth="1.5" /><path d="M3 17q2-4 5 0t4-1 4 0 5-2" stroke="#3050e0" strokeWidth="1.5" /></Box>],
  ["RSI", <span className="text-[14px] font-bold text-[#3040d0]">RSI</span>],
  ["资金", <svg viewBox="0 0 24 24" className="h-6 w-6"><path d="M17 7c-2-3-10-3-10 1s10 3 10 8-9 5-11 1" fill="none" stroke="#b0a0a0" strokeWidth="6" /><path d="M16 7c-2-3-9-3-9 1s9 3 9 7-8 5-10 1M9 3l3-2 3 2" fill="none" stroke="#c83030" strokeWidth="3" /></svg>],
  ["移动", <svg viewBox="0 0 24 24" className="h-6 w-6" fill="#2a60c8"><path d="M12 0l5 6H7zM12 24l-5-6h10zM0 12l6-5v10zM24 12l-6 5V7z" /><path d="M12 6v12M6 12h12" stroke="#2a60c8" strokeWidth="4" /><circle cx="12" cy="12" r="3" fill="#fff" stroke="#2a60c8" /></svg>],
  ["画笔", <svg viewBox="0 0 24 24" className="h-6 w-6"><path d="M2 22l2-7L16 4l5 5L9 19z" fill="#f0a840" stroke="#a06010" /><path d="M16 4l3-2 4 4-2 3z" fill="#d05050" /><path d="M2 22l1-4 3 3z" fill="#503010" /></svg>],
];
const iconsC = [
  ["F5", <Box c="#1a6ad8"><Txt>F5</Txt></Box>],
  ["刷新", <Box><path d="M5 11c1-5 9-6 12-2l2-2v6h-6l2-2c-2-3-6-2-7 1zM19 14c-1 5-9 6-12 2l-2 2v-5h6l-2 1c2 3 6 2 7 0z" fill="#48b838" /></Box>],
  ...["1", "5", "15", "30", "60", "日", "周", "月", "N", "多", "季", "年"].map((t) => [t, t]),
];

function IconGroup({ items, className }) {
  return (
    <div className={`flex shrink-0 flex-col ${className}`}>
      {items.map(([n, el]) => (
        <button
          key={n}
          aria-label={n}
          className={`flex min-h-0 flex-1 items-center justify-center ${n === "日" ? "ml-[2px] border-t border-l border-[#909090] bg-[#f8f8f8]" : ""}`}
        >
          {el}
        </button>
      ))}
    </div>
  );
}

function Toolbar() {
  return (
    <aside className="flex w-[37px] shrink-0 flex-col border-l border-[#909090] bg-[#f0f0f0] text-[17px] font-medium text-[#1f4ea8]">
      <IconGroup items={iconsA} className="h-[482px]" />
      <div className="flex h-[13px] items-center px-1"><span className="h-[2px] w-full bg-[#a0a0a0]" /></div>
      <IconGroup items={iconsB} className="h-[172px]" />
      <div className="flex h-[14px] items-center px-1"><span className="h-[2px] w-full bg-[#a0a0a0]" /></div>
      <IconGroup items={iconsC} className="h-[484px]" />
    </aside>
  );
}

/* ---------- status bar ---------- */
const indices = [
  ["上证", "3197.90", "-42.46", "-1.31%", "4062"],
  ["深证", "11058.6", "-246.73", "-2.18%", "6157"],
  ["中小", "7275.93", "-179.07", "-2.40%", "670.1"],
];

function Meter() {
  return (
    <svg viewBox="0 0 76 22" className="h-[22px] w-[76px]">
      <path d="M1 1h74v9H1zM19 1v9M56 1v9" fill="none" stroke="#f0f0f0" strokeWidth="2" />
      <rect x="25" y="2" width="11" height="8" fill="#ff0000" />
      <rect x="37" y="2" width="17" height="8" fill="#008000" />
      <path d="M7 14h68M7 19h68" stroke="#008000" strokeWidth="3" strokeDasharray="9 3" />
    </svg>
  );
}

function StatusBar() {
  return (
    <footer className="flex h-[33px] shrink-0 items-center border-b-2 border-[#506070] bg-linear-to-b from-[#2c2c2c] to-[#060606] pl-[2px] text-[#e0e0e0]">
      {indices.map(([n, a, b, c, d]) => (
        <div key={n} className="grid grid-cols-[52px_90px_86px_86px_98px] items-center leading-7">
          <span className="text-[24px] font-light">{n}</span>
          <span className="text-[21px] font-bold text-[#00c840]">{a}</span>
          <span className="text-[21px] font-bold text-[#00c840]">{b}</span>
          <span className="text-[21px] font-bold text-[#00c840]">{c}</span>
          <span className="text-[21px] font-bold">{d}<span className="text-[24px] font-light">亿</span></span>
        </div>
      ))}
      <div className="flex h-full items-center gap-[2px] border-x border-[#404040] px-[3px]"><Meter /><Meter /></div>
      <span className="ml-2 text-[17px]">广州云主站Z25</span>
    </footer>
  );
}

/* ---------- top bar ---------- */
function TopBar() {
  const round = "flex h-[29px] w-[29px] items-center justify-center rounded-full border-2 border-[#909090] bg-linear-to-b from-white to-[#d0d0d0]";
  return (
    <header className="flex h-[33px] shrink-0 items-center bg-linear-to-b from-[#fafafa] to-[#c8c8c8] text-black">
      <svg viewBox="0 0 26 26" className="h-[26px] w-[26px] shrink-0">
        <rect width="26" height="26" fill="#d83030" />
        <path d="M0 0h26v8L10 14 0 8z" fill="#e88080" />
        <path d="M1 8c3 5 8 6 11 3 2-3 6-7 12-9-2 3-3 5-3 8 2 1 2 2 1 4-4 2-8 5-13 8 2-3 1-5-1-6C4 15 1 13 1 8z" fill="#fff" />
      </svg>
      <nav className="ml-[14px] flex gap-7">
        {menus.map((m) => <button key={m} className="min-w-[36px]">{m}</button>)}
      </nav>
      <nav className="ml-10 flex h-full gap-2 text-[#ff0000]">
        {["发现", "市场"].map((m) => (
          <button key={m} className="w-[60px] border-x-2 border-[#b8b8b8] bg-linear-to-b from-white to-[#e4e4e4]">{m}</button>
        ))}
      </nav>
      <p className="flex-1 pr-1 text-center">交易未登录 金桥信息</p>
      <time className="flex h-full w-[128px] items-center justify-center border-x-2 border-[#b0b0b0] bg-linear-to-b from-white to-[#e0e0e0] pr-4 text-[17px] text-[#404040]">20:37:18 周六</time>
      <div className="ml-[11px] flex gap-2">
        {trades.map((t) => {
          const parts = t.split(" ");
          return (
            <button
              key={t}
              className={`flex h-[26px] w-[71px] items-center rounded-[10px] border-2 border-[#a0a0a0] bg-linear-to-b from-white to-[#c8c8c8] px-[6px] font-medium ${parts.length > 1 ? "justify-between" : "justify-center"} ${t === "跌停卖" ? "text-[#9010f0]" : "text-[#ff0000]"}`}
            >
              {parts.map((p) => <span key={p}>{p}</span>)}
            </button>
          );
        })}
      </div>
      <div className="mr-2 ml-[10px] flex gap-1">
        <button className={round} aria-label="最小化"><svg viewBox="0 0 20 20" className="h-5 w-5"><path d="M1 15h17" stroke="#606060" strokeWidth="3" /></svg></button>
        <button className={round} aria-label="还原"><svg viewBox="0 0 20 20" className="h-5 w-5" fill="none" stroke="#606060" strokeWidth="2.5"><path d="M7 7V3h11v8h-5" /><path d="M2 8h10v8H2zM4 12h6" /></svg></button>
        <button className={round} aria-label="关闭"><svg viewBox="0 0 20 20" className="h-5 w-5"><path d="M3 3l14 14M17 3 3 17" stroke="#505050" strokeWidth="4" /></svg></button>
      </div>
    </header>
  );
}

export default function App() {
  return (
    <div className="flex h-screen flex-col overflow-hidden bg-black font-['Liberation_Sans','Noto_Sans_CJK_SC',sans-serif] text-[18px] leading-[22px] whitespace-nowrap [&_svg]:block">
      <TopBar />
      <div className="flex min-h-0 flex-1">
        <div className="flex min-w-0 flex-1 flex-col">
          <div className="flex min-h-0 flex-1">
            <div className="flex min-w-0 flex-1 flex-col">
              <div className="flex min-h-0 flex-1">
                <nav className="flex w-7 shrink-0 flex-col border-r-2 border-b-2 border-l border-[#b00000] border-l-[#e06060] text-[#c0c0c0]">
                  {sideTabs.map((chars, k) => (
                    <button
                      key={k}
                      className={`flex flex-col items-center border-b-2 border-[#b00000] py-2 leading-[18px] ${k === 1 ? "bg-[#b40000] text-white" : ""}`}
                    >
                      {chars.map((c) => <span key={c}>{c}</span>)}
                    </button>
                  ))}
                </nav>
                <Charts />
              </div>
              <nav className="flex h-[27px] shrink-0 border-b-2 border-l border-[#b00000] text-[#c0c0c0]">
                {infoTabs.map((t, k) => (
                  <button key={t} className={`border-r border-[#b00000] px-[5px] ${k > 1 ? "text-[#b0b000]" : ""}`}>{t}</button>
                ))}
                <button className="ml-auto w-[72px] border-l border-[#b00000] text-center text-[#b0b000]">图文F10</button>
                <button className="w-[77px] border-l-2 border-[#b00000] text-center text-[#b0b000]">侧边栏«</button>
              </nav>
            </div>
            <Quote />
          </div>
          <StatusBar />
        </div>
        <Toolbar />
      </div>
    </div>
  );
}
